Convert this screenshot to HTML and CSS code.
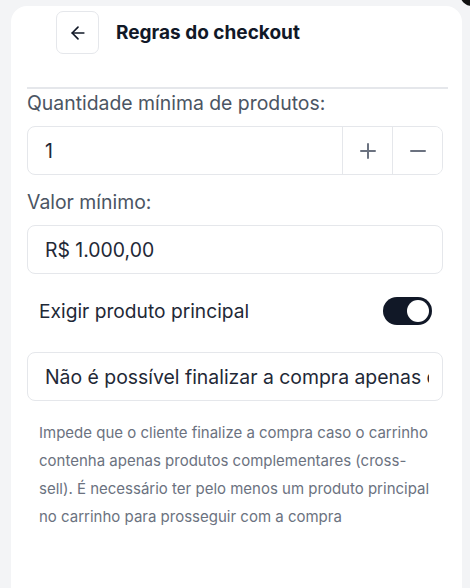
FILE: index.html
```html
<!DOCTYPE html>
<html lang="pt-BR">
<head>
    <meta charset="UTF-8">
    <meta name="viewport" content="width=device-width, initial-scale=1.0">
    <title>Regras do checkout</title>
    <link rel="stylesheet" href="styles.css">
</head>
<body>
    <span class="corner-dot"></span>
    <div class="card">
        <div class="header">
            <button class="back-btn" aria-label="Voltar">
                <svg width="20" height="20" viewBox="0 0 24 24" fill="none" stroke="#111827" stroke-width="2" stroke-linecap="round" stroke-linejoin="round">
                    <path d="M19 12H5"/>
                    <path d="M12 19l-7-7 7-7"/>
                </svg>
            </button>
            <h1 class="title">Regras do checkout</h1>
        </div>

        <div class="divider"></div>

        <label class="label">Quantidade mínima de produtos:</label>
        <div class="field stepper">
            <span class="field-value">1</span>
            <button class="step-btn" aria-label="Aumentar">
                <svg width="18" height="18" viewBox="0 0 18 18" stroke="#6b7280" stroke-width="2" stroke-linecap="round">
                    <path d="M9 2v14M2 9h14"/>
                </svg>
            </button>
            <button class="step-btn" aria-label="Diminuir">
                <svg width="18" height="18" viewBox="0 0 18 18" stroke="#6b7280" stroke-width="2" stroke-linecap="round">
                    <path d="M2 9h14"/>
                </svg>
            </button>
        </div>

        <label class="label">Valor mínimo:</label>
        <div class="field">
            <span class="field-value">R$ 1.000,00</span>
        </div>

        <div class="toggle-row">
            <span class="toggle-label">Exigir produto principal</span>
            <span class="toggle on"><span class="knob"></span></span>
        </div>

        <div class="field message">
            <span class="field-value">Não é possível finalizar a compra apenas com produtos complementares</span>
        </div>

        <p class="help">Impede que o cliente finalize a compra caso o carrinho contenha apenas produtos complementares (cross-sell). É necessário ter pelo menos um produto principal no carrinho para prosseguir com a compra</p>
    </div>
</body>
</html>
```

FILE: styles.css
```css
html, body {
    height: 100%;
}
body {
    margin: 0;
    background: #f3f4f6;
    font-family: Inter, "Noto Sans", sans-serif;
    color: #1f2937;
    overflow: hidden;
}
.corner-dot {
    position: absolute;
    top: -18px;
    right: -14px;
    width: 24px;
    height: 24px;
    border-radius: 50%;
    background: #111;
}
.card {
    margin: 6px 8px 0 11px;
    min-height: calc(100% - 6px);
    box-sizing: border-box;
    background: #fff;
    border-radius: 16px 16px 0 0;
    padding: 5px 19px 0 16px;
}
.header {
    display: flex;
    align-items: center;
    gap: 17px;
    padding-left: 29px;
}
.back-btn {
    width: 43px;
    height: 43px;
    display: flex;
    align-items: center;
    justify-content: center;
    background: #fff;
    border: 1px solid #e5e7eb;
    border-radius: 7px;
    padding: 0;
}
.title {
    margin: 0;
    font-size: 19px;
    font-weight: 700;
    color: #111827;
}
.divider {
    margin: 33px -5px 0 0;
    border-top: 2px solid #e5e7eb;
}
.label {
    display: block;
    margin-top: 2px;
    font-size: 19.4px;
    line-height: 24px;
    color: #4b5563;
}
.field {
    display: flex;
    align-items: center;
    height: 49px;
    box-sizing: border-box;
    margin: 11px 0 15px;
    border: 1px solid #e5e7eb;
    border-radius: 8px;
    padding-left: 17px;
    font-size: 19.4px;
    color: #1f2937;
    overflow: hidden;
}
.field-value {
    flex: 1;
    white-space: nowrap;
    overflow: hidden;
}
.stepper {
    padding-right: 0;
}
.step-btn {
    width: 50px;
    height: 100%;
    display: flex;
    align-items: center;
    justify-content: center;
    background: #fff;
    border: 0;
    border-left: 1px solid #e5e7eb;
    padding: 0;
}
.toggle-row {
    display: flex;
    align-items: center;
    justify-content: space-between;
    margin: 23px 11px 0 12px;
}
.toggle-label {
    font-size: 19.2px;
    color: #1f2937;
}
.toggle {
    width: 49px;
    height: 28px;
    border-radius: 14px;
    background: #111827;
    display: flex;
    align-items: center;
    justify-content: flex-end;
    padding: 0 3px;
    box-sizing: border-box;
}
.knob {
    width: 22px;
    height: 22px;
    border-radius: 50%;
    background: #fff;
}
.message {
    margin: 27px 0 0;
    padding-right: 13px;
}
.help {
    margin: 18px 12px 0;
    font-size: 15px;
    line-height: 28px;
    color: #6b7280;
}
```
